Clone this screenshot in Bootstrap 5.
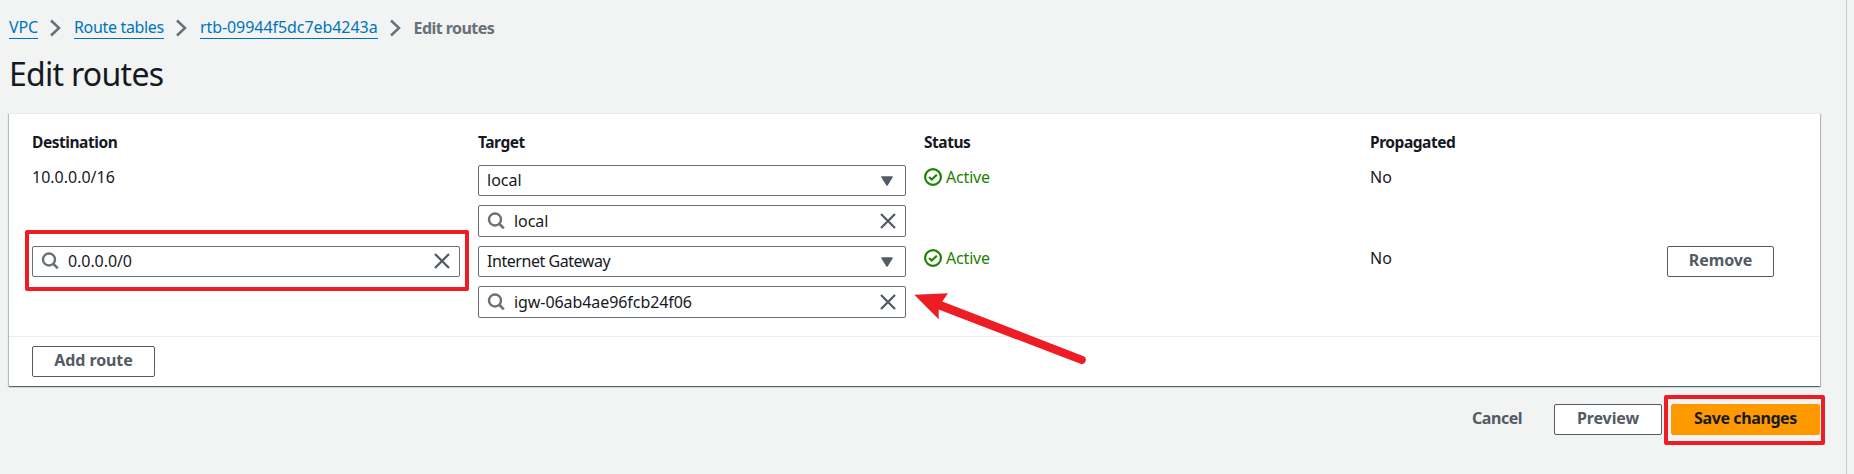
<!DOCTYPE html>
<html lang="en">
<head>
<meta charset="utf-8">
<title>Edit routes</title>
<link href="https://cdn.jsdelivr.net/npm/bootstrap@5.3.0/dist/css/bootstrap.min.css" rel="stylesheet">
<style>
body{background:#f2f3f3;color:#16191f;font-family:"Noto Sans","Open Sans",sans-serif;font-size:16px;line-height:24px;overflow:hidden}
.page{width:1847px;height:474px;border-right:1px solid #c5c9cb;padding:16px 26px 0 9px}
.crumb{gap:12px}
.crumb a{color:#0073bb;text-decoration:none;border-bottom:1px solid #0073bb;line-height:21px}
.crumb .c1{letter-spacing:-.15px}
.crumb .c2{letter-spacing:-.33px}
.crumb .c3{letter-spacing:-.06px}
.crumb svg{display:block}
.crumb .here{color:#687078;font-weight:700;letter-spacing:-.55px}
h1{font-size:32px;font-weight:400;line-height:40px;margin:14px 0 19px;letter-spacing:-.72px}
.panel{background:#fff;height:273px;border-top:1px solid #eaeded;box-shadow:0 1px 1px 0 rgba(0,28,36,.45),1px 1px 1px 0 rgba(0,28,36,.2),-1px 1px 1px 0 rgba(0,28,36,.2)}
.routes{display:grid;grid-template-columns:428px 428px 428px 279px 107px;column-gap:18px;padding:16px 23px 0;height:223px;border-bottom:1px solid #eaeded;grid-template-rows:35px 81px 81px}
.routes .h{font-weight:700;font-size:15.5px;letter-spacing:-.45px}
.field{height:31px;border:1px solid #687078;border-radius:2px;background:#fff;padding:0 9px 1px 8px}
.field + .field{margin-top:9px;height:32px;padding-bottom:0}
.field.dd{padding:0 12px 2px 8px}
.field.dd svg{position:relative;top:1px}
.gw{letter-spacing:-.45px}
.val{margin-left:9px;letter-spacing:-.07px}
.ok{color:#1d8102;letter-spacing:-.18px}
.abtn{--bs-btn-padding-y:0;--bs-btn-padding-x:0;--bs-btn-border-radius:2px;display:block;height:31px;border:1px solid #545b64;background:#fff;color:#545b64;font-weight:700;font-size:16px;line-height:27px;padding-bottom:2px;letter-spacing:-.1px}
.add{width:123px}
.preview{width:108px}
.plain{border-color:transparent;background:transparent;width:50px;margin-right:33px;letter-spacing:-.45px}
.save{width:149px;background:#ff9900;border-color:#ff9900;color:#16191f;letter-spacing:-.4px}
.footer-row{padding:9px 23px}
.actions{margin-top:18px}
.gap-save{margin-left:9px}
.redbox{border:4px solid #ee1c24;border-radius:2px;position:absolute;pointer-events:none}
.red-dest{left:-7px;top:-16px;width:444px;height:61px}
.red-save{left:-7px;top:-9px;width:161px;height:50px}
.arrow{position:absolute;left:912px;top:290px}
</style>
</head>
<body>
<svg class="d-none">
<symbol id="chev" viewBox="0 0 12 18"><path d="M1 1.500 9 9l-8 7.500" fill="none" stroke="#687078" stroke-width="2.500"/></symbol>
<symbol id="mag" viewBox="0 0 18 18"><circle cx="8" cy="7.500" r="6" fill="none" stroke="#687078" stroke-width="2.400"/><path d="m12 11.500 4.800 4.800" stroke="#687078" stroke-width="2.600"/></symbol>
<symbol id="x" viewBox="0 0 16 16"><path d="m1 1 14 14M15 1 1 15" stroke="#545b64" stroke-width="2.300"/></symbol>
<symbol id="tri" viewBox="0 0 12 10"><path d="M1 1h10L6 9z" fill="#545b64" stroke="#545b64" stroke-width="1.500" stroke-linejoin="round"/></symbol>
<symbol id="ok" viewBox="0 0 18 18"><circle cx="9" cy="9" r="7.900" fill="none" stroke="#1d8102" stroke-width="2.200"/><path d="m5 9 2.800 2.500 5-4.800" fill="none" stroke="#1d8102" stroke-width="2.200"/></symbol>
</svg>
<main class="page position-relative">
<nav class="crumb d-flex align-items-center">
<a href="#" class="c1">VPC</a><svg width="12" height="18"><use href="#chev"/></svg>
<a href="#" class="c2">Route tables</a><svg width="12" height="18"><use href="#chev"/></svg>
<a href="#" class="c3">rtb-09944f5dc7eb4243a</a><svg width="12" height="18"><use href="#chev"/></svg>
<span class="here">Edit routes</span>
</nav>
<h1>Edit routes</h1>
<section class="panel">
<div class="routes">
<div class="h">Destination</div><div class="h">Target</div><div class="h">Status</div><div class="h">Propagated</div><div></div>
<div>10.0.0.0/16</div>
<div>
<div class="field dd d-flex align-items-center justify-content-between"><span>local</span><svg width="12" height="10"><use href="#tri"/></svg></div>
<div class="field d-flex align-items-center"><svg width="18" height="18"><use href="#mag"/></svg><span class="val me-auto">local</span><svg width="16" height="16"><use href="#x"/></svg></div>
</div>
<div class="ok d-flex align-items-center align-self-start gap-1"><svg width="18" height="18"><use href="#ok"/></svg>Active</div>
<div>No</div><div></div>
<div class="position-relative">
<div class="field d-flex align-items-center"><svg width="18" height="18"><use href="#mag"/></svg><span class="val me-auto">0.0.0.0/0</span><svg width="16" height="16"><use href="#x"/></svg></div>
<div class="redbox red-dest"></div>
</div>
<div>
<div class="field dd d-flex align-items-center justify-content-between"><span class="gw">Internet Gateway</span><svg width="12" height="10"><use href="#tri"/></svg></div>
<div class="field d-flex align-items-center"><svg width="18" height="18"><use href="#mag"/></svg><span class="val me-auto">igw-06ab4ae96fcb24f06</span><svg width="16" height="16"><use href="#x"/></svg></div>
</div>
<div class="ok d-flex align-items-center align-self-start gap-1"><svg width="18" height="18"><use href="#ok"/></svg>Active</div>
<div>No</div><button class="btn abtn">Remove</button>
</div>
<div class="footer-row"><button class="btn abtn add">Add route</button></div>
</section>
<div class="actions d-flex justify-content-end">
<button class="btn abtn plain">Cancel</button>
<button class="btn abtn preview">Preview</button>
<div class="position-relative gap-save"><button class="btn abtn save">Save changes</button><div class="redbox red-save"></div></div>
</div>
<svg class="arrow" width="176" height="78"><path d="M2.300 4.800 36 3.200 30.300 11.500 171 66a4 4 0 0 1-2.600 7.800L26.700 19.500v9.800z" fill="#ee1c24"/></svg>
</main>
<script src="https://cdn.jsdelivr.net/npm/bootstrap@5.3.0/dist/js/bootstrap.bundle.min.js"></script>
</body>
</html>
